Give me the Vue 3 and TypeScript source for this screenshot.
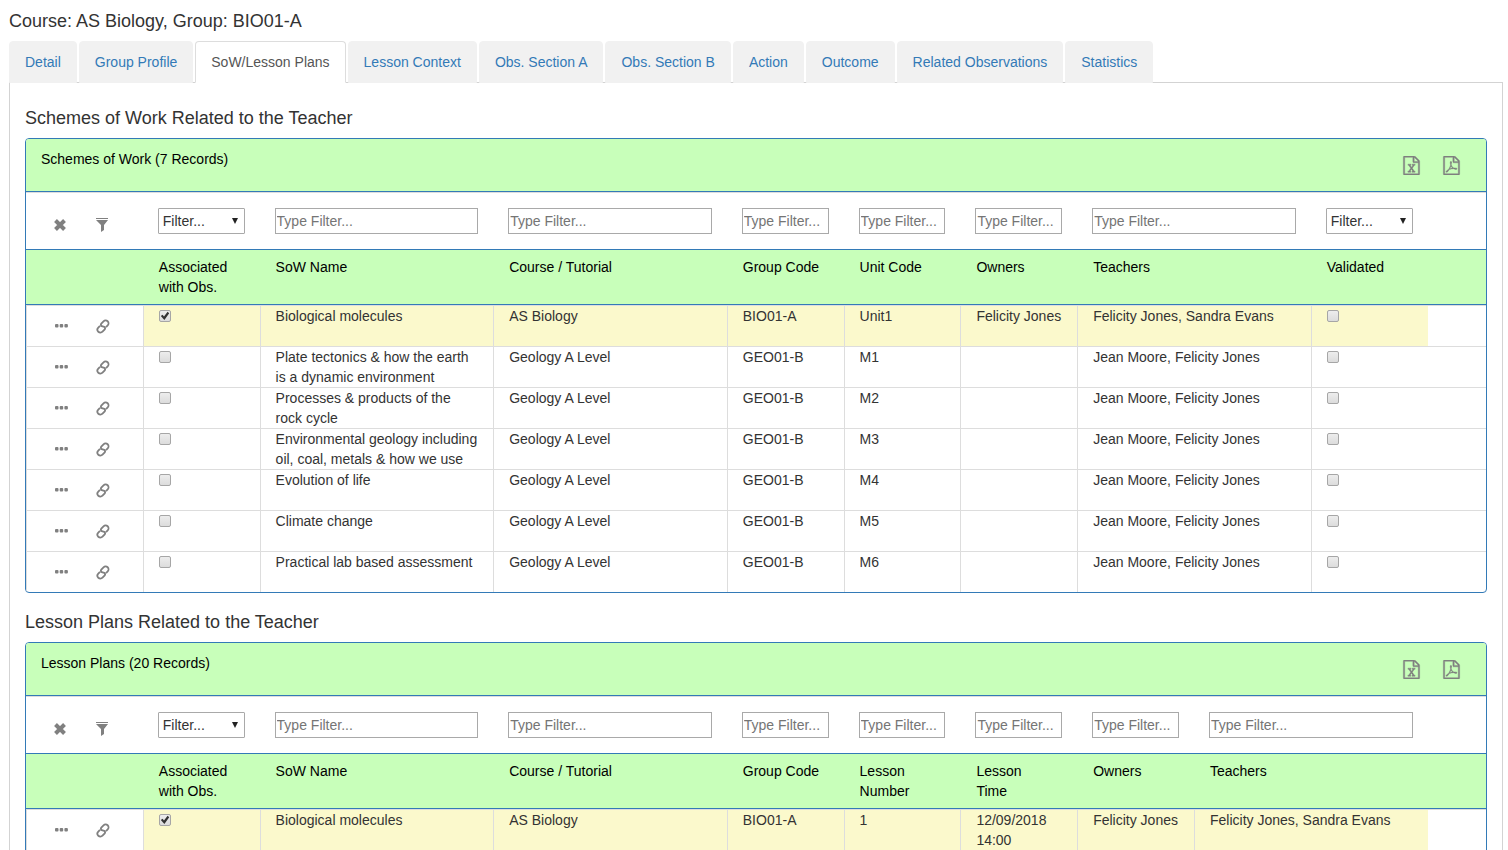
<script setup lang="ts">
import { reactive } from 'vue'

type ColumnKind = 'check' | 'text'
type ColumnSize = 'narrow' | 'wide'

interface Column {
  label: string
  kind: ColumnKind
  size: ColumnSize
}

interface Grid {
  id: string
  heading: string
  title: string
  columns: Column[]
  rows: { highlighted: boolean; cells: (string | boolean)[] }[]
}

const tabs = [
  'Detail',
  'Group Profile',
  'SoW/Lesson Plans',
  'Lesson Context',
  'Obs. Section A',
  'Obs. Section B',
  'Action',
  'Outcome',
  'Related Observations',
  'Statistics',
]
const activeTab = 'SoW/Lesson Plans'

const col = (label: string, size: ColumnSize = 'narrow', kind: ColumnKind = 'text'): Column => ({ label, size, kind })

const geology = (name: string, unit: string) => ({
  highlighted: false,
  cells: [false, name, 'Geology A Level', 'GEO01-B', unit, '', 'Jean Moore, Felicity Jones', false],
})

const grids = reactive<Grid[]>([
  {
    id: 'sow',
    heading: 'Schemes of Work Related to the Teacher',
    title: 'Schemes of Work (7 Records)',
    columns: [
      col('Associated\nwith Obs.', 'narrow', 'check'),
      col('SoW Name', 'wide'),
      col('Course / Tutorial', 'wide'),
      col('Group Code'),
      col('Unit Code'),
      col('Owners'),
      col('Teachers', 'wide'),
      col('Validated', 'narrow', 'check'),
    ],
    rows: [
      {
        highlighted: true,
        cells: [true, 'Biological molecules', 'AS Biology', 'BIO01-A', 'Unit1', 'Felicity Jones', 'Felicity Jones, Sandra Evans', false],
      },
      geology('Plate tectonics & how the earth is a dynamic environment', 'M1'),
      geology('Processes & products of the rock cycle', 'M2'),
      geology('Environmental geology including oil, coal, metals & how we use', 'M3'),
      geology('Evolution of life', 'M4'),
      geology('Climate change', 'M5'),
      geology('Practical lab based assessment', 'M6'),
    ],
  },
  {
    id: 'plans',
    heading: 'Lesson Plans Related to the Teacher',
    title: 'Lesson Plans (20 Records)',
    columns: [
      col('Associated\nwith Obs.', 'narrow', 'check'),
      col('SoW Name', 'wide'),
      col('Course / Tutorial', 'wide'),
      col('Group Code'),
      col('Lesson\nNumber'),
      col('Lesson\nTime'),
      col('Owners'),
      col('Teachers', 'wide'),
    ],
    rows: [
      {
        highlighted: true,
        cells: [true, 'Biological molecules', 'AS Biology', 'BIO01-A', '1', '12/09/2018 14:00', 'Felicity Jones', 'Felicity Jones, Sandra Evans'],
      },
    ],
  },
])
</script>

<template>
  <main class="page">
    <h1 class="heading page-title">Course: AS Biology, Group: BIO01-A</h1>

    <nav class="tabs">
      <a v-for="tab in tabs" :key="tab" href="#" class="tab" :class="{ active: tab === activeTab }">{{ tab }}</a>
    </nav>

    <div class="content">
      <section v-for="grid in grids" :key="grid.id" class="section">
        <h2 class="heading">{{ grid.heading }}</h2>
        <div class="panel">
          <header class="panel-head">
            <span>{{ grid.title }}</span>
            <span class="exports">
              <button type="button" class="icon-button" aria-label="Export to Excel">
                <svg class="file-icon" viewBox="0 0 1792 1792">
                  <path d="M1596 380q28 28 48 76t20 88v1152q0 40-28 68t-68 28H224q-40 0-68-28t-28-68V96q0-40 28-68t68-28h896q40 0 88 20t76 48zm-444-244v376h376q-10-29-22-41l-313-313q-12-12-41-22zm384 1528V640h-416q-40 0-68-28t-28-68V128H256v1536h1280zm-979-234v106h281v-106h-75l103-161q5-7 10-16.500t7.500-13.500 3.500-4h2q1 4 5 10 2 4 4.500 7.500t6 8 6.500 8.500l107 161h-76v106h291v-106h-68l-192-273 195-282h67v-107h-279v107h74l-103 159q-4 7-10 16.500t-9 13.500l-2 3h-2q-1-4-5-10-6-11-17-23l-106-159h76v-107h-290v107h68l189 272-194 283h-68z" />
                </svg>
              </button>
              <button type="button" class="icon-button" aria-label="Export to PDF">
                <svg class="file-icon" viewBox="0 0 1792 1792">
                  <path d="M1596 380q28 28 48 76t20 88v1152q0 40-28 68t-68 28H224q-40 0-68-28t-28-68V96q0-40 28-68t68-28h896q40 0 88 20t76 48zm-444-244v376h376q-10-29-22-41l-313-313q-12-12-41-22zm384 1528V640h-416q-40 0-68-28t-28-68V128H256v1536h1280zm-514-593q33 26 84 56 59-7 117-7 147 0 177 49 16 22 2 52 0 1-1 2l-2 2v1q-6 38-71 38-48 0-115-20t-130-53q-221 24-392 83-153 262-242 262-15 0-28-7l-24-12q-1-1-6-5-10-10-6-36 9-40 56-91.500t132-96.500q14-9 23 6 2 2 2 4 52-85 107-197 68-136 104-262-24-82-30.500-159.500t6.500-127.500q11-40 42-40h22q23 0 35 15 18 21 9 68-2 6-4 8 1 3 1 8v30q-2 123-14 192 55 164 146 238zm-576 411q52-24 137-158-51 40-87.500 84t-49.500 74zm398-920q-15 42-2 132 1-7 7-44 0-3 7-43 1-4 4-8-1-1-1-2t-1-2q-1-22-13-36 0 1-1 2v2zm-124 661q135-54 284-81-2-1-13-9.500t-16-13.500q-76-67-127-176-27 86-83 197-30 56-45 83zm646-16q-24-24-140-24 76 28 124 28 14 0 18-1 0-1-2-3z" />
                </svg>
              </button>
            </span>
          </header>

          <table class="grid">
            <colgroup>
              <col class="narrow" />
              <col v-for="column in grid.columns" :key="column.label" :class="column.size" />
              <col />
            </colgroup>
            <thead>
              <tr class="filters">
                <td class="filter-tools">
                  <div class="tools">
                    <button type="button" class="icon-button" aria-label="Clear filters">
                      <svg class="icon" viewBox="0 0 14 14">
                        <path d="M2.500 2.500L11.500 11.500M11.500 2.500L2.500 11.500" fill="none" stroke="currentColor" stroke-width="4" />
                      </svg>
                    </button>
                    <button type="button" class="icon-button" aria-label="Apply filters">
                      <svg class="icon" viewBox="0 0 14 14">
                        <path d="M1 0H13V1H1ZM1 2H13L9 7V12L6 14V7Z" />
                      </svg>
                    </button>
                  </div>
                </td>
                <td v-for="column in grid.columns" :key="column.label">
                  <span v-if="column.kind === 'check'" class="select-box">
                    <select class="field" :aria-label="'Filter ' + column.label">
                      <option>Filter...</option>
                      <option>Yes</option>
                      <option>No</option>
                    </select>
                    <svg class="arrow" viewBox="0 0 6 6"><path d="M0 0H6L3 6Z" /></svg>
                  </span>
                  <input v-else type="text" class="field" placeholder="Type Filter..." :aria-label="'Filter ' + column.label" />
                </td>
                <td></td>
              </tr>
              <tr class="labels">
                <td></td>
                <th v-for="column in grid.columns" :key="column.label" scope="col">{{ column.label }}</th>
                <td></td>
              </tr>
            </thead>
            <tbody>
              <tr v-for="(row, r) in grid.rows" :key="r" :class="{ highlighted: row.highlighted }">
                <td class="row-tools">
                  <div class="tools">
                    <button type="button" class="icon-button" aria-label="More actions">
                      <svg class="icon" viewBox="0 0 14 14">
                        <rect x="1" y="5" width="3.500" height="3.500" rx="1" />
                        <rect x="5.700" y="5" width="3.500" height="3.500" rx="1" />
                        <rect x="10.400" y="5" width="3.500" height="3.500" rx="1" />
                      </svg>
                    </button>
                    <button type="button" class="icon-button" aria-label="Link record">
                      <svg class="link-icon" viewBox="0 0 14 15">
                        <path d="M10 8.200L11.700 6.400A2.900 2.900 0 0 0 7.500 2.300L5.300 4.600A1.900 1.900 0 0 0 5.800 7.200L8.200 7.800A1.900 1.900 0 0 1 8.700 10.400L6.500 12.700A2.900 2.900 0 0 1 2.300 8.600L4 6.800" />
                      </svg>
                    </button>
                  </div>
                </td>
                <td v-for="(cell, c) in row.cells" :key="c" class="data">
                  <input
                    v-if="typeof cell === 'boolean'"
                    v-model="row.cells[c]"
                    type="checkbox"
                    class="check"
                    :aria-label="grid.columns[c].label"
                  />
                  <template v-else>{{ cell }}</template>
                </td>
                <td></td>
              </tr>
            </tbody>
          </table>
        </div>
      </section>
    </div>
  </main>
</template>

<style>
body {
  margin: 0;
  background: #fff;
}
</style>

<style scoped>
* {
  box-sizing: border-box;
}

.page {
  padding: 11px 5px 0 9px;
  font: 14px/20px "Liberation Sans", Arial, sans-serif;
  color: #333;
}

.heading {
  margin: 0 0 10px;
  font-size: 18px;
  font-weight: 400;
  line-height: 20px;
}

.tabs {
  display: flex;
  gap: 2px;
  margin-bottom: -1px;
}

.tab {
  padding: 10px 15px;
  border: 1px solid #f1f1f1;
  border-radius: 4px 4px 0 0;
  background: #f1f1f1;
  color: #337ab7;
  text-decoration: none;
}

.tab.active {
  position: relative;
  border-color: #ddd #ddd #fff;
  background: #fff;
  color: #555;
}

.content {
  padding: 25px 15px 15px;
  border: 1px solid #d3d3d3;
}

.section {
  margin-bottom: 19px;
}

.panel {
  overflow: hidden;
  border: 1px solid #337ab7;
  border-radius: 4px;
}

.section:last-child .panel {
  border-radius: 4px 4px 0 0;
}

.panel-head {
  display: flex;
  justify-content: space-between;
  height: 53px;
  padding: 10px 15px;
  border-bottom: 1px solid #337ab7;
  background: #c8ffba;
  color: #000;
}

.exports {
  display: flex;
  height: 32px;
}

.icon-button {
  display: flex;
  align-items: center;
  justify-content: center;
  width: 40px;
  padding: 0;
  border: 0;
  background: none;
  color: #808080;
  cursor: pointer;
}

.file-icon {
  width: 19px;
  height: 19px;
  fill: currentColor;
  stroke: currentColor;
  stroke-width: 36;
}

.icon {
  width: 14px;
  height: 14px;
  fill: currentColor;
}

.link-icon {
  width: 14px;
  height: 15px;
  fill: none;
  stroke: currentColor;
  stroke-width: 1.8;
}

.grid {
  width: 100%;
  table-layout: fixed;
  border-collapse: separate;
  border-spacing: 0;
}

.narrow {
  width: 8%;
}

.wide {
  width: 16%;
}

td,
th {
  padding: 0;
  text-align: left;
  vertical-align: top;
  font-weight: 400;
}

.filters td {
  padding: 15px;
  border-top: 1px solid #ddd;
  border-bottom: 1px solid #337ab7;
}

.filters .filter-tools {
  padding: 20px 0 12px;
}

.tools {
  display: flex;
  height: 24px;
  padding-left: 13px;
}

.tools .icon-button {
  width: 42px;
}

.row-tools .tools {
  height: 40px;
}

.select-box {
  display: block;
  position: relative;
}

.field {
  display: block;
  width: 100%;
  height: 26px;
  padding: 1px;
  border: 1px solid #a9a9a9;
  border-radius: 0;
  background: #fff;
  color: #333;
  font: inherit;
}

.field::placeholder {
  color: #757575;
}

select.field {
  padding: 0 4px;
  border-radius: 1px;
  appearance: none;
}

.arrow {
  position: absolute;
  top: 10px;
  right: 7px;
  width: 6px;
  height: 6px;
  fill: #222;
  pointer-events: none;
}

.labels td,
.labels th {
  padding: 7px 16px;
  border-bottom: 1px solid #337ab7;
  background: #c8ffba;
  color: #000;
  white-space: pre-line;
}

tbody td {
  height: 41px;
  border-top: 1px solid #ddd;
}

.row-tools,
.data {
  border-left: 1px solid #ddd;
}

.data {
  padding: 0 15px;
}

.highlighted .data {
  background: #fbf9cc;
}

.check {
  display: block;
  width: 12px;
  height: 12px;
  margin: 4px 0 0;
  border: 1px solid #a6a6a6;
  border-radius: 2px;
  background: linear-gradient(#ededed, #dcdcdc);
  appearance: none;
}

.check:checked::before {
  content: "";
  display: block;
  width: 10px;
  height: 10px;
  background: #333;
  clip-path: polygon(10% 50%, 28% 38%, 42% 54%, 78% 8%, 94% 22%, 46% 90%);
}
</style>
